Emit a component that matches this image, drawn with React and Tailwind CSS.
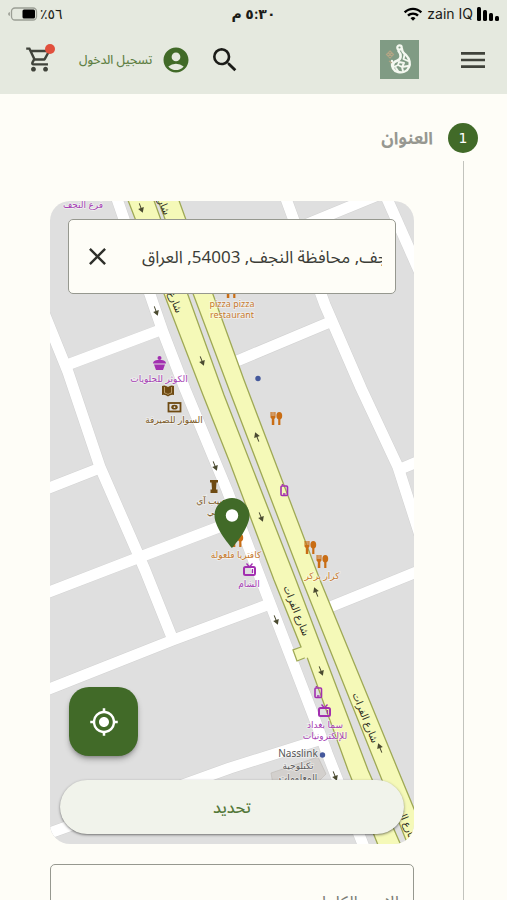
import React, { useState } from "react";
import {
  MdAccountCircle,
  MdClose,
  MdLocationOn,
  MdMenu,
  MdMyLocation,
  MdOutlineShoppingCart,
  MdSearch,
  MdWifi,
} from "react-icons/md";

const ROADS = [
  "M116 196 L163 332 L185 389 L227 490 L258 572 L315 720 L327 753 L366 852",
  "M42 308 L68 372 L100 467 L145 570 L173 640",
  "M67 365 L163 329",
  "M44 490 L100 468",
  "M44 594 L140 557 L240 519",
  "M44 691 L173 640 L267 605",
  "M44 835 L230 768 L322 739",
  "M285 196 L325 305 L361 388 L398 467 L424 548",
  "M237 361 L330 322",
  "M385 194 L424 282",
  "M300 227 L378 195",
  "M398 470 L424 459",
  "M330 607 L424 569",
];

const STREET_LABELS = [
  { x: 296, y: 611, text: "شارع الفرات" },
  { x: 365, y: 718, text: "شارع الفرات" },
  { x: 404, y: 818, text: "شارع الفرات" },
  { x: 169, y: 288, text: "شارع الفرات" },
  { x: 157, y: 190, text: "شارع الفرات" },
];

const ARROWS = [
  { x: 141, y: 208, angle: 70 },
  { x: 156, y: 311, angle: 70 },
  { x: 202, y: 361, angle: 68 },
  { x: 215, y: 466, angle: 68 },
  { x: 257, y: 437, angle: 248 },
  { x: 261, y: 517, angle: 68 },
  { x: 276, y: 620, angle: 68 },
  { x: 316, y: 592, angle: 248 },
  { x: 321, y: 671, angle: 68 },
  { x: 380, y: 748, angle: 248 },
  { x: 335, y: 776, angle: 68 },
];

const PLACES = [
  { x: 83, y: 208, text: "فرع النجف", color: "#a640b4" },
  { x: 232, y: 307, text: "pizza pizza", color: "#c77a2c" },
  { x: 232, y: 318, text: "restaurant", color: "#c77a2c" },
  { x: 159, y: 382, text: "الكوثر للحلويات", color: "#a640b4" },
  { x: 174, y: 423, text: "السوار للصيرفة", color: "#7c5a26" },
  { x: 212, y: 504, text: "حبيب آي", color: "#7c5a26" },
  { x: 212, y: 515, text: "بي", color: "#7c5a26" },
  { x: 236, y: 558, text: "كافتريا فلعولة", color: "#c77a2c" },
  { x: 249, y: 587, text: "الشام", color: "#a640b4" },
  { x: 322, y: 579, text: "كرار بركر", color: "#c77a2c" },
  { x: 325, y: 728, text: "سما بغداد", color: "#a640b4" },
  { x: 325, y: 739, text: "للإلكترونيات", color: "#a640b4" },
  { x: 298, y: 769, text: "تكنلوجية", color: "#5c5c5c" },
  { x: 298, y: 781, text: "المعلومات", color: "#5c5c5c" },
];

const RESTAURANTS = [
  { x: 225, y: 285 },
  { x: 270, y: 412 },
  { x: 231, y: 534 },
  { x: 304, y: 541 },
  { x: 316, y: 555 },
];

function ForkSpoon({ x, y }) {
  return (
    <g transform={`translate(${x} ${y})`} fill="#c96d14">
      <path d="M0.500 0h1.200v4h.7V0h1.200v4h.7V0h1.200v5.500L4.300 7v6H1.800V7L.5 5.500z" />
      <ellipse cx="9.300" cy="3.800" rx="2.900" ry="3.800" />
      <path d="M8.200 6h2.200v7H8.200z" />
    </g>
  );
}

function Television({ x, y }) {
  return (
    <g
      transform={`translate(${x} ${y})`}
      fill="none"
      stroke="#a22fb0"
      strokeWidth="2"
    >
      <rect x="1" y="4" width="11" height="8" rx="1.500" />
      <path d="M3.500 0.500 L6.500 4 L9.500 0.500" strokeWidth="1.300" />
      <path d="M9.500 6v4" strokeWidth="1.300" />
    </g>
  );
}

function Phone({ x, y }) {
  return (
    <g transform={`translate(${x} ${y})`} fill="none" stroke="#a22fb0">
      <rect x="1" y="2" width="6.500" height="9.500" rx="1" strokeWidth="1.600" />
      <path d="M2.500 1.500V0M3 10h2.500" strokeWidth="1.600" />
    </g>
  );
}

function MapCanvas() {
  return (
    <svg
      viewBox="50 201 364 643"
      preserveAspectRatio="xMidYMid slice"
      className="block w-full bg-[#dfdfdf]"
      style={{ direction: "ltr" }}
      fontFamily="'Noto Sans', 'DejaVu Sans', sans-serif"
      aria-hidden="true"
    >
      {/* building footprint */}
      <path
        d="M271 773 L318 757 L326 774 L300 800 L274 790z"
        fill="#d3d0cd"
        stroke="#c2bdb8"
        strokeWidth="0.7"
      />
      {[
        { stroke: "#d2d2d2", width: 12 },
        { stroke: "#ffffff", width: 11 },
      ].map((layer) => (
        <g
          key={layer.stroke}
          fill="none"
          stroke={layer.stroke}
          strokeWidth={layer.width}
          strokeLinejoin="round"
        >
          {ROADS.map((d) => (
            <path key={d} d={d} />
          ))}
        </g>
      ))}

      {/* the two carriageways */}
      <g fill="#f5f9b8" stroke="#9fa955" strokeWidth="1.3">
        <path d="M126 195 L203 395 L230 463 L274 580 L301 647 L293 650 L297 661 L307 657 L348 770 L380 850 L403 850 L368 770 L296 580 L224 395 L152 195z" />
        <path d="M156 195 L230 392 L302 580 L378 770 L410 850 L431 850 L398 770 L320 580 L244 380 L177 195z" />
      </g>
      <path d="M302 646 L310 643 L314 654 L305 659z" fill="#f5f9b8" />

      <g stroke="#4a4a30" fill="#4a4a30" strokeWidth="1">
        {ARROWS.map((a) => (
          <g
            key={`${a.x}-${a.y}`}
            transform={`translate(${a.x} ${a.y}) rotate(${a.angle})`}
          >
            <path d="M-5 0H3" />
            <path d="M0 -3 L5 0 L0 3z" stroke="none" />
          </g>
        ))}
      </g>

      <g fontSize="10" fontWeight="500" fill="#2e2e22" textAnchor="middle">
        {STREET_LABELS.map((l) => (
          <text
            key={`${l.x}-${l.y}`}
            transform={`translate(${l.x} ${l.y}) rotate(68)`}
            dy="3"
          >
            {l.text}
          </text>
        ))}
      </g>

      {RESTAURANTS.map((r) => (
        <ForkSpoon key={`${r.x}-${r.y}`} x={r.x} y={r.y} />
      ))}
      <Television x={243} y={563} />
      <Television x={318} y={704} />
      <Phone x={280} y={484} />
      <Phone x={314} y={686} />

      {/* sweets shop */}
      <g fill="#a22fb0">
        <circle cx="159.500" cy="358" r="2" />
        <path d="M153 363.500q0-3 4-3.500h5q4 .5 4 3.500z" />
        <path d="M154 364.500h11l-2 5.500h-7z" />
      </g>
      {/* book shop */}
      <path
        d="M162 386q3-1.500 6 1q3-2.500 6-1v9q-3-1-6 1.500q-3-2.500-6-1.500z"
        fill="#6e4a12"
      />
      <path
        d="M164.500 387v6q2 0 3.500 1.500q1.500-1.500 3.500-1.500v-6"
        fill="none"
        stroke="#b79a68"
      />
      {/* exchange office */}
      <rect
        x="168.500"
        y="403"
        width="12"
        height="8.500"
        fill="none"
        stroke="#6e4a12"
        strokeWidth="1.800"
      />
      <ellipse cx="174.500" cy="407.200" rx="3.200" ry="2.400" fill="#6e4a12" />
      <circle cx="174.500" cy="407.200" r="0.900" fill="#dfdfdf" />
      {/* monument */}
      <path
        d="M210 480h8v2.500h-1.500l-.5 7h1.500v3.500h-7v-3.500h1.500l-.5-7H210z"
        fill="#6e4a12"
      />

      <g fill="#44589c">
        <circle cx="258" cy="378.500" r="2.700" />
        <circle cx="322.500" cy="755" r="2.700" />
      </g>

      <g
        fontSize="9"
        textAnchor="middle"
        stroke="#ffffff"
        strokeOpacity="0.5"
        strokeWidth="1.5"
        paintOrder="stroke"
      >
        {PLACES.map((p) => (
          <text key={`${p.x}-${p.y}`} x={p.x} y={p.y} fill={p.color}>
            {p.text}
          </text>
        ))}
        <text x="298" y="757" fontSize="10" fill="#555555">
          Nasslink
        </text>
      </g>
    </svg>
  );
}

function Logo() {
  return (
    <svg
      viewBox="0 0 39 39"
      className="h-[39px] w-[39px] bg-[#809b84]"
      role="img"
      aria-label="الشعار"
    >
      <g
        fill="none"
        stroke="#f4f8f0"
        strokeLinecap="round"
        strokeLinejoin="round"
      >
        <circle cx="19.500" cy="7.500" r="2.200" strokeWidth="2.200" />
        <path
          d="M22 9 C22 13 24 13 26 15 C30 19 30.500 24 29 27 C27 32 22 33 18 32 C13 31 11.500 27 12 21"
          strokeWidth="2.400"
        />
        <path
          d="M18.500 11 C22 15 21 19 17.500 20.500 C15 21.500 13 22 13 26"
          strokeWidth="2.600"
        />
        <path
          d="M24.500 15 L23.500 19 L28 21 M19 22 L24 23 L22 27 L28 26 M14 27 L18 25 L19 22 M18 25 L22 27 L23 31 M16 28 L18 31"
          strokeWidth="1.900"
        />
      </g>
      <path
        d="M10 11 L13.500 14.500 L10 18 L6.500 14.500z M8 12.500 L12 16.500 M12 12.500 L8 16.500 M9 21l3 2"
        fill="none"
        stroke="#b3a585"
        strokeWidth="1.200"
      />
    </svg>
  );
}

function StatusBar() {
  return (
    <div className="grid h-[27px] grid-cols-3 items-center px-2 font-['Inter','Noto_Sans','DejaVu_Sans',sans-serif] text-sm text-[#1b1c18]">
      <div className="flex items-center gap-1">
        <svg
          viewBox="0 0 22 14"
          className="h-[14px] w-[22px] fill-black"
          aria-hidden="true"
        >
          <rect x="0" y="0" width="4" height="14" rx="1.500" />
          <rect x="6" y="3" width="4" height="11" rx="1.500" />
          <rect x="12" y="6" width="4" height="8" rx="1.500" />
          <rect x="18" y="9" width="4" height="5" rx="1.500" />
        </svg>
        <span>zain IQ</span>
        <MdWifi className="h-5 w-5 text-black" />
      </div>
      <div className="text-center font-semibold">٥:٣٠ م</div>
      <div dir="ltr" className="flex items-center gap-[2px]">
        <svg
          viewBox="0 0 30 14"
          className="h-[14px] w-[30px]"
          aria-hidden="true"
        >
          <path d="M2 5v4q-2-.5-2-2t2-2z" fill="#a3a69d" />
          <rect
            x="3.500"
            y="1"
            width="25"
            height="12"
            rx="3.500"
            fill="none"
            stroke="#9b9e95"
            strokeWidth="1.300"
          />
          <rect x="14.500" y="2.500" width="12.500" height="9" rx="1.500" />
        </svg>
        <span>٪٥٦</span>
      </div>
    </div>
  );
}

function AppBar() {
  return (
    <nav className="flex h-[67px] items-center justify-between pr-[18px] pb-[2px] pl-[25px]">
      <div className="flex items-center gap-[38px]">
        <button aria-label="القائمة" className="text-[#40433b]">
          <MdMenu className="h-8 w-8" />
        </button>
        <Logo />
      </div>
      <div className="flex items-center">
        <button aria-label="بحث" className="text-[#1b1c18]">
          <MdSearch className="h-8 w-8" />
        </button>
        <a
          href="#login"
          className="mr-[18px] flex items-center gap-[9px] text-xs font-medium text-[#5f8044]"
        >
          <MdAccountCircle className="h-[30px] w-[30px] text-[#416a28]" />
          تسجيل الدخول
        </a>
        <button
          aria-label="السلة"
          className="relative mr-[25px] text-[#40433b]"
        >
          <MdOutlineShoppingCart className="h-[29px] w-[29px]" />
          <span className="absolute -top-px -right-px h-[10px] w-[10px] rounded-full bg-[#e1503d]" />
        </button>
      </div>
    </nav>
  );
}

export default function App() {
  const [address, setAddress] = useState("النجف, محافظة النجف, 54003, العراق");
  const [fullName, setFullName] = useState("");

  return (
    <div
      dir="rtl"
      className="flex h-screen flex-col overflow-hidden bg-[#fefdf7] font-['Noto_Sans','Noto_Sans_Arabic','DejaVu_Sans',sans-serif]"
    >
      <header className="shrink-0 bg-[#e5e9df]">
        <StatusBar />
        <AppBar />
      </header>

      <main className="min-h-0 flex-1 overflow-hidden pt-[29px] pr-[29px] pl-[50px]">
        <section className="flex gap-[15px]">
          <div className="flex w-[30px] shrink-0 flex-col items-center gap-2">
            <span className="flex h-[30px] w-[30px] items-center justify-center rounded-full bg-[#416a28] font-['DejaVu_Sans',sans-serif] text-sm text-white">
              1
            </span>
            <span className="w-px flex-1 bg-[#c2c3bd]" />
          </div>

          <div className="min-w-0 flex-1 pb-10">
            <h2 className="text-[17px] leading-[30px] font-bold text-[#979891]">
              العنوان
            </h2>

            <div className="mt-12 mr-[19px]">
              <div className="relative overflow-hidden rounded-[20px]">
                <MapCanvas />

                <div className="absolute inset-0 flex items-center justify-center">
                  <span className="absolute h-4 w-4 -translate-y-[7px] rounded-full bg-white" />
                  <MdLocationOn className="relative h-[60px] w-[60px] text-[#416a28]" />
                </div>

                <div className="absolute inset-x-[18px] top-[18px] flex h-[75px] items-center justify-between gap-6 rounded-[5px] border border-[#96988f] bg-[#fefdf7] pr-[13px] pl-[14px]">
                  <input
                    aria-label="العنوان"
                    value={address}
                    onChange={(e) => setAddress(e.target.value)}
                    className="min-w-0 flex-1 bg-transparent indent-[-21px] text-[17px] text-[#3c3d37] outline-none"
                  />
                  <button
                    aria-label="مسح"
                    onClick={() => setAddress("")}
                    className="text-[#2f302b]"
                  >
                    <MdClose className="h-[29px] w-[29px]" />
                  </button>
                </div>

                <button
                  aria-label="موقعي الحالي"
                  className="absolute bottom-[88px] left-[19px] flex h-[69px] w-[69px] items-center justify-center rounded-[20px] bg-[#416a28] text-white shadow-md shadow-black/30"
                >
                  <MdMyLocation className="h-[30px] w-[30px]" />
                </button>

                <button className="absolute inset-x-[10px] bottom-[10px] h-[54px] rounded-full bg-[#f1f3eb] text-base font-medium text-[#54783a] shadow-sm shadow-black/40">
                  تحديد
                </button>
              </div>

              <input
                aria-label="الاسم الكامل"
                placeholder="الاسم الكامل"
                value={fullName}
                onChange={(e) => setFullName(e.target.value)}
                className="mt-5 h-[74px] w-full rounded-[5px] border border-[#96988f] bg-transparent px-[14px] text-[17px] text-[#3c3d37] outline-none placeholder:text-[#7b7c75]"
              />
            </div>
          </div>
        </section>
      </main>
    </div>
  );
}
